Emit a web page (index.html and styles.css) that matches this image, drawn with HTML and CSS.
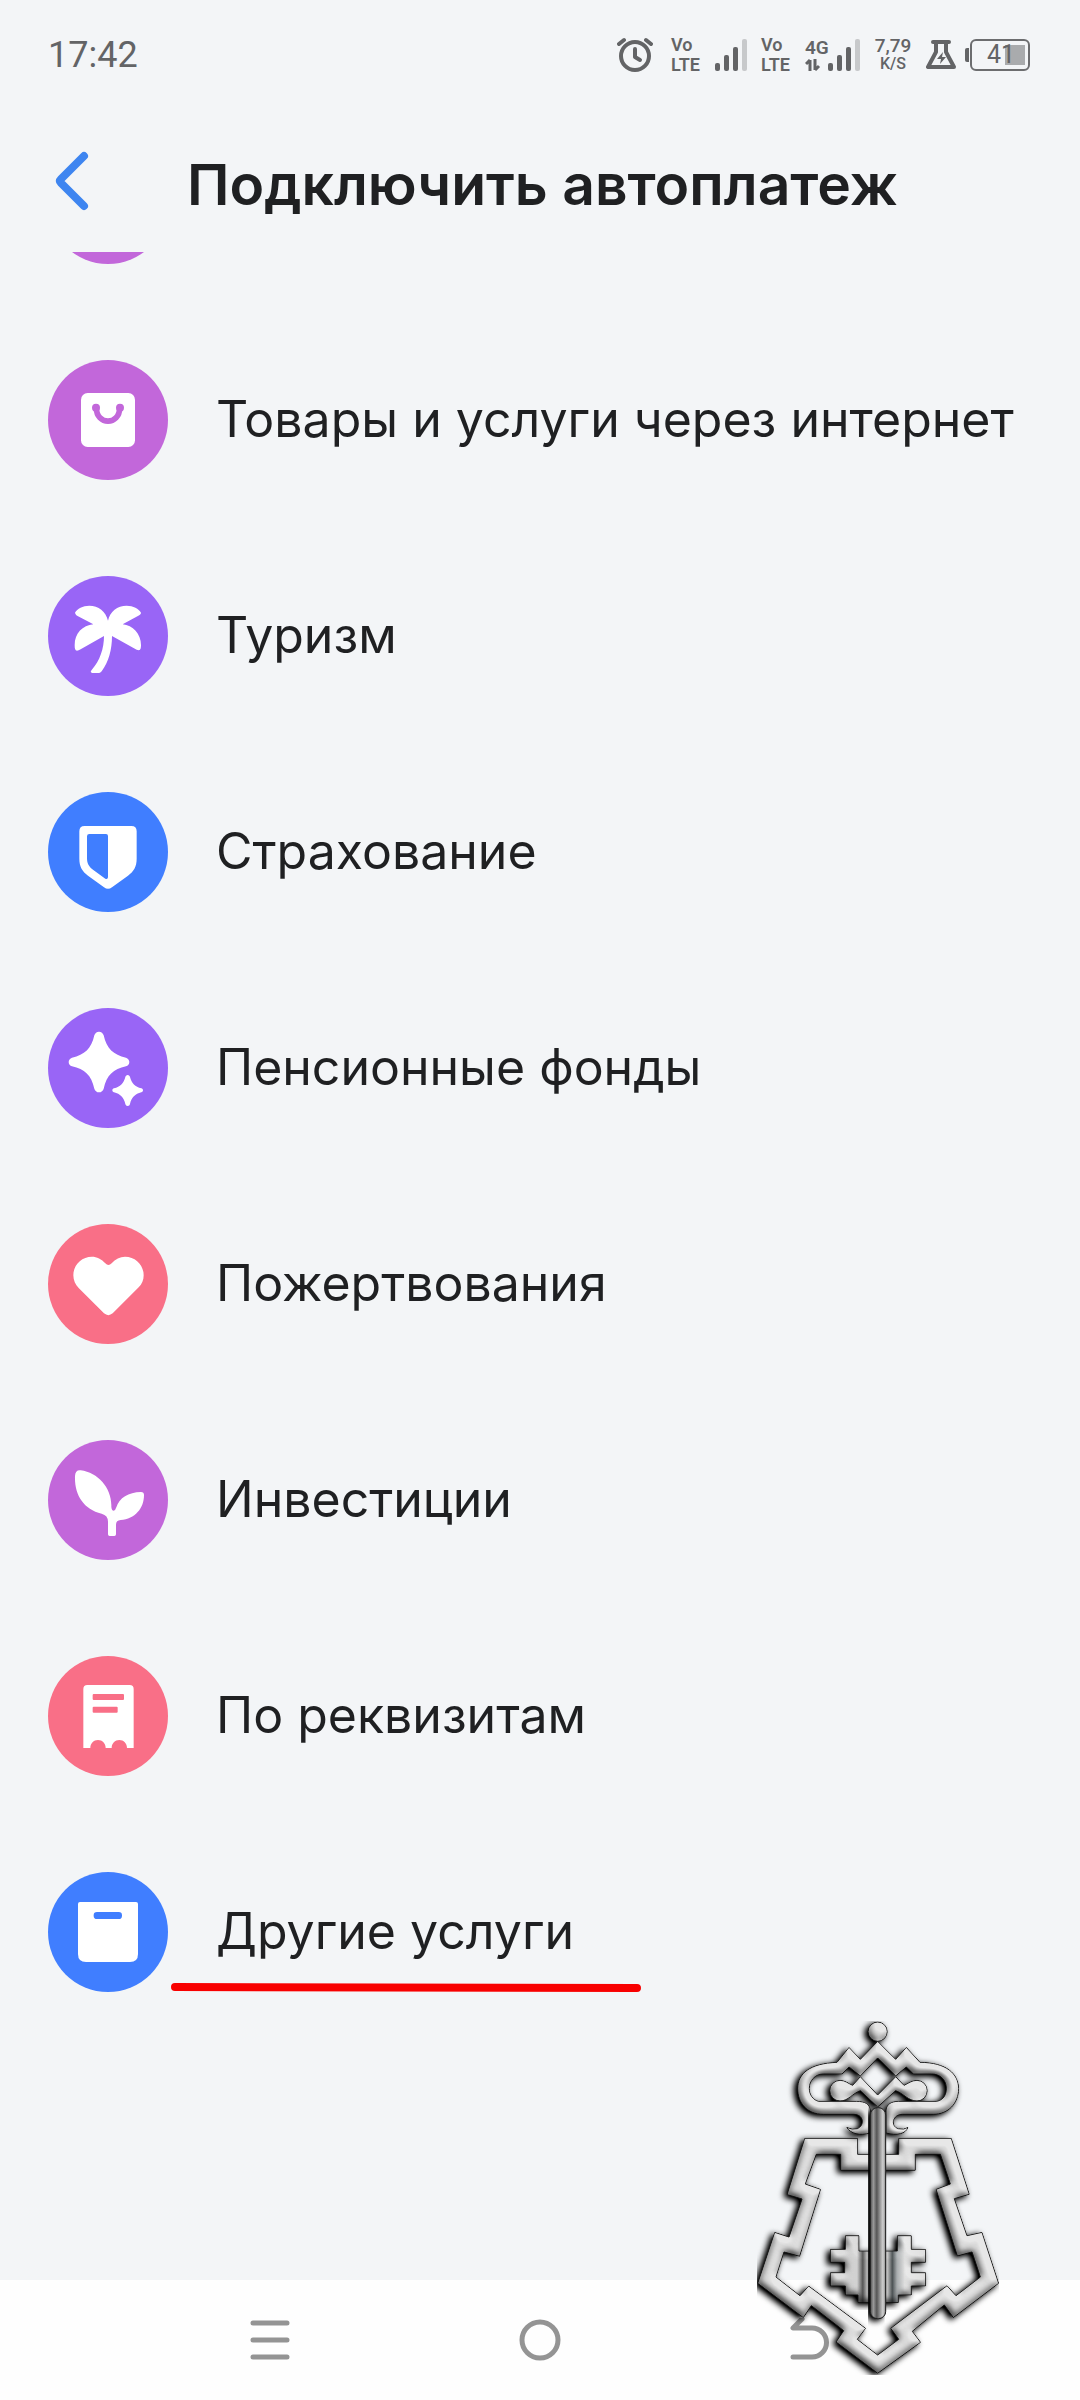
FILE: index.html
```html
<!DOCTYPE html>
<html lang="ru">
<head>
<meta charset="utf-8">
<meta name="viewport" content="width=device-width, initial-scale=1.0">
<title>Подключить автоплатеж</title>
<link rel="stylesheet" href="styles.css">
</head>
<body>
<div class="screen">

  <div class="status-bar">
    <time class="clock">17:42</time>
    <div class="status-icons">
      <svg class="alarm" viewBox="0 0 36 36" fill="none" stroke="currentColor" stroke-linecap="round">
        <circle cx="18" cy="19" r="14" stroke-width="4"/>
        <path d="M18 12v8l5 3" stroke-width="4" stroke-linejoin="round"/>
        <path d="M2 7l5-4M34 7l-5-4" stroke-width="4"/>
      </svg>
      <div class="net"><span>Vo</span><span>LTE</span></div>
      <svg class="signal" viewBox="0 0 32 32" fill="currentColor">
        <rect x="0" y="24" width="5" height="8" rx="2"/>
        <rect x="9" y="16" width="5" height="16" rx="2"/>
        <rect x="18" y="8" width="5" height="24" rx="2"/>
        <rect x="27" y="0" width="5" height="32" rx="2" opacity=".3"/>
      </svg>
      <div class="net"><span>Vo</span><span>LTE</span></div>
      <div class="mobile">
        <div class="net-4g">
          <span>4G</span>
          <svg viewBox="0 0 16 12" fill="none" stroke="currentColor" stroke-width="3">
            <path d="M5 12V1M1 5l4-4M10 0v11M14 7l-4 4"/>
          </svg>
        </div>
        <svg class="signal" viewBox="0 0 32 32" fill="currentColor">
          <rect x="0" y="24" width="5" height="8" rx="2"/>
          <rect x="9" y="16" width="5" height="16" rx="2"/>
          <rect x="18" y="8" width="5" height="24" rx="2"/>
          <rect x="27" y="0" width="5" height="32" rx="2" opacity=".3"/>
        </svg>
      </div>
      <div class="speed"><span>7,79</span><small>K/S</small></div>
      <svg class="flask" viewBox="0 0 30 32">
        <path d="M7 3h16M10 3v10L2 28h26L20 13V3" fill="none" stroke="currentColor" stroke-width="4" stroke-linejoin="round" stroke-linecap="round"/>
        <path d="M17 13l-6 7h4l-1 5 6-7h-4z" fill="currentColor"/>
      </svg>
      <div class="battery">41</div>
    </div>
  </div>

  <header class="header">
    <button class="back" type="button" aria-label="Назад">
      <svg viewBox="0 0 34 60" fill="none" stroke="currentColor" stroke-width="8" stroke-linecap="round" stroke-linejoin="round">
        <path d="M29 5L6 28q-2 2 0 4l23 23"/>
      </svg>
    </button>
    <h1>Подключить автоплатеж</h1>
  </header>

  <main class="list-wrap">
    <ul class="list">
      <li>
        <a class="item" href="#"><span class="icon pink"></span></a>
      </li>
      <li>
        <a class="item" href="#">
          <svg class="icon pink" viewBox="54 60 360 360">
            <rect x="153" y="159" width="162" height="162" rx="20"/>
            <g class="cut">
              <circle cx="198" cy="203" r="12"/>
              <circle cx="270" cy="203" r="12"/>
            </g>
            <path class="cut-line" d="M199 203c0 54 70 54 70 0" stroke-width="17"/>
          </svg>
          <span>Товары и услуги через интернет</span>
        </a>
      </li>
      <li>
        <a class="item" href="#">
          <svg class="icon violet" viewBox="54 708 360 360">
            <path d="M234 842C228 814 205 797 178 797C158 797 142 806 135 818C136 824 141 827 147 830L190 853C158 856 134 880 134 915C134 926 135 931 141 932C144 932 148 930 152 928L222 888C222 925 210 962 185 990C180 996 183 999 190 999L203 999C210 999 213 996 216 992C236 965 246 930 246 888L320 929C328 932 333 932 333 915C333 882 308 856 278 853L325 827C331 824 333 821 333 818C326 806 310 797 290 797C262 797 240 814 234 842Z"/>
          </svg>
          <span>Туризм</span>
        </a>
      </li>
      <li>
        <a class="item" href="#">
          <svg class="icon blue" viewBox="54 66 360 360">
            <path d="M164 168H304Q320 168 320 184V266C320 290 311 304 294 317L246 352Q234 361 222 352L174 317C157 304 148 290 148 266V184Q148 168 164 168Z"/>
            <path class="cut" d="M178 192H228Q234 192 234 198V322Q233 329 226 326L190 300C176 290 171 280 171 265V199Q171 192 178 192Z"/>
          </svg>
          <span>Страхование</span>
        </a>
      </li>
      <li>
        <a class="item" href="#">
          <svg class="icon violet" viewBox="54 714 360 360">
            <path d="M207 785C214 785 219 790 221 796C230 836 250 855 288 863C294 865 298 870 298 876C298 882 294 887 288 889C250 897 230 916 221 956C219 962 214 967 207 967C200 967 195 962 193 956C184 916 164 897 126 889C120 887 116 882 116 876C116 870 120 865 126 863C164 855 184 836 193 796C195 790 200 785 207 785Z"/>
            <path d="M293 915C297 915 299 918 300 921C305 940 315 950 334 955C337 956 339 958 339 961C339 964 337 966 334 967C315 972 305 982 300 1002C299 1005 297 1008 293 1008C289 1008 287 1005 286 1002C281 982 271 972 252 967C249 966 247 964 247 961C247 958 249 956 252 955C271 950 281 940 286 921C287 918 289 915 293 915Z"/>
          </svg>
          <span>Пенсионные фонды</span>
        </a>
      </li>
      <li>
        <a class="item" href="#">
          <svg class="icon red" viewBox="54 72 360 360">
            <path d="M226 190C215 177 200 170 186 170C154 170 130 195 130 226C130 241 136 254 146 264L222 340Q235 351 248 340L326 262C336 252 341 240 341 226C341 195 317 170 285 170C270 170 256 177 245 190Q235 200 226 190Z"/>
          </svg>
          <span>Пожертвования</span>
        </a>
      </li>
      <li>
        <a class="item" href="#">
          <svg class="icon pink" viewBox="54 720 360 360">
            <path d="M152 811Q136 809 135 828C133 884 160 927 215 941Q234 946 234 965V1003Q234 1008 239 1008H253Q258 1008 258 1003V974Q258 961 272 960C315 957 342 925 342 885Q342 876 333 876C295 877 268 893 259 922Q256 932 251 932Q245 932 244 920C246 865 205 818 152 811Z"/>
          </svg>
          <span>Инвестиции</span>
        </a>
      </li>
      <li>
        <a class="item" href="#">
          <svg class="icon red" viewBox="54 78 360 360">
            <path d="M172 165H299Q311 165 311 177V354H291C291 340 281 330 268 330S245 340 245 354H227C227 340 217 330 204 330S181 340 181 354H160V177Q160 165 172 165Z"/>
            <g class="cut">
              <rect x="188" y="192" width="94" height="18" rx="3"/>
              <rect x="188" y="230" width="75" height="18" rx="3"/>
            </g>
          </svg>
          <span>По реквизитам</span>
        </a>
      </li>
      <li>
        <a class="item marked" href="#">
          <svg class="icon blue" viewBox="54 726 360 360">
            <path d="M150 816H318Q324 816 324 822V972Q324 996 300 996H168Q144 996 144 972V822Q144 816 150 816Z"/>
            <rect class="cut" x="191" y="846" width="85" height="21" rx="10"/>
          </svg>
          <span>Другие услуги</span>
          <svg class="underline" viewBox="0 0 470 12">
            <path d="M4 5L466 6" fill="none" stroke="#f80000" stroke-width="8" stroke-linecap="round"/>
          </svg>
        </a>
      </li>
    </ul>
  </main>

  <nav class="nav-bar">
    <button type="button" aria-label="Меню">
      <svg viewBox="0 0 44 44"><path d="M5 5h34M5 22h34M5 39h34"/></svg>
    </button>
    <button type="button" aria-label="Домой">
      <svg viewBox="0 0 44 44"><circle cx="22" cy="22" r="18"/></svg>
    </button>
    <button type="button" aria-label="Назад">
      <svg viewBox="0 0 44 44"><path d="M14 1L5 10h19a14 14 0 0 1 0 29H5"/></svg>
    </button>
  </nav>

  <!-- key emblem over the lower right corner -->
  <svg class="emblem" viewBox="51 63 726 1062" aria-hidden="true">
    <defs>
      <filter id="metal" x="-10%" y="-10%" width="120%" height="120%" color-interpolation-filters="sRGB">
        <feGaussianBlur in="SourceAlpha" stdDeviation="11" result="bump"/>
        <feDiffuseLighting in="bump" surfaceScale="14" diffuseConstant="1.15" lighting-color="#fff" result="light">
          <feDistantLight azimuth="300" elevation="54"/>
        </feDiffuseLighting>
        <feComposite in="SourceGraphic" in2="light" operator="arithmetic" k1="0.78" k2="0.28" k3="0" k4="0" result="lit"/>
        <feComposite in="lit" in2="SourceAlpha" operator="in" result="body"/>
        <feGaussianBlur in="SourceAlpha" stdDeviation="9" result="soft"/>
        <feOffset in="soft" dx="-10" dy="7" result="moved"/>
        <feComponentTransfer in="moved" result="shadow">
          <feFuncA type="linear" slope="1.2"/>
        </feComponentTransfer>
        <feMerge>
          <feMergeNode in="shadow"/>
          <feMergeNode in="body"/>
        </feMerge>
      </filter>
      <linearGradient id="shaft">
        <stop offset="0" stop-color="#4a4a4a"/>
        <stop offset=".2" stop-color="#999"/>
        <stop offset=".42" stop-color="#555"/>
        <stop offset=".6" stop-color="#8c8c8c"/>
        <stop offset=".82" stop-color="#d0d0d0"/>
        <stop offset="1" stop-color="#888"/>
      </linearGradient>
      <linearGradient id="bit">
        <stop offset="0" stop-color="#d2d2d2"/>
        <stop offset=".28" stop-color="#d0d0d0"/>
        <stop offset=".34" stop-color="#555"/>
        <stop offset=".38" stop-color="#aaa"/>
        <stop offset=".6" stop-color="#bbb"/>
        <stop offset=".65" stop-color="#4c5254"/>
        <stop offset=".7" stop-color="#a8acae"/>
        <stop offset=".78" stop-color="#ddd"/>
        <stop offset="1" stop-color="#d2d2d2"/>
      </linearGradient>
    </defs>
    <g stroke="#222" stroke-width="3" fill="#dadada">
      <path filter="url(#metal)" fill-rule="evenodd" d="M194 415H353V463H476V415H634L688 583L643 596L681 707L726 697L776 850L640 953L613 915L517 994L542 1027L413 1120L288 1026L311 992L214 917L190 953L53 850L104 697L147 711L186 597L141 584Z
        M229 463H302V511H526V463H601L631 552L588 568L652 768L696 756L721 831L648 887L621 857L452 985L476 1018L413 1065L352 1018L377 985L206 858L180 887L108 831L132 756L179 769L242 568L196 552Z"/>
      <path filter="url(#metal)" fill="url(#bit)" d="M357 707H316V748H271V787H314V818H271V858H316V885H354V908H475V885H514V858H557V818H514V787H557V748H514V707H472V753H357Z"/>
      <g filter="url(#metal)">
        <path d="M300 241C316 241 324 250 338 256L361 230L413 285L467 230L492 256C505 250 515 241 531 241A31 31 0 0 1 531 303C505 303 490 280 467 272L413 321L361 272C338 280 325 303 300 303A31 31 0 0 1 300 241Z"/>
        <path fill-rule="evenodd" d="M291 187L327 142L361 178L413 124L467 178L499 142L540 187C620 187 656 222 656 266C656 310 625 343 580 343H488C458 343 450 378 475 386Q492 390 504 382C498 402 470 408 438 399V330C440 312 455 304 475 304H590C612 300 619 282 619 265C619 240 600 222 575 222H520L499 201L467 228L413 174L361 228L327 201L306 222H250C225 222 208 243 208 265C208 285 220 300 236 304H350C375 304 389 312 391 330V399C360 408 332 402 320 382Q337 390 352 386C375 376 372 343 340 343H250C200 343 173 308 173 266C173 220 210 190 291 187Z"/>
        <circle cx="413" cy="95" r="29"/>
      </g>
      <g filter="url(#metal)">
        <rect x="391" y="323" width="46" height="633" rx="22"/>
      </g>
      <rect x="391" y="323" width="46" height="633" rx="22" fill="url(#shaft)"/>
    </g>
  </svg>

</div>
</body>
</html>
```
FILE: styles.css
```css
* { box-sizing: border-box; }
body {
  margin: 0;
  font-family: Inter, sans-serif;
  color: #1f2022;
  background: #f3f5f7;
}
.screen {
  position: relative;
  display: flex;
  flex-direction: column;
  min-height: 100vh;
  overflow: hidden;
}
button {
  padding: 0;
  border: none;
  background: none;
}

/* status bar */
.status-bar {
  display: flex;
  align-items: center;
  justify-content: space-between;
  height: 110px;
  padding: 0 50px 0 48px;
  font-family: Roboto, sans-serif;
  color: #636466;
}
.clock { font-size: 36px; }
.status-icons {
  display: flex;
  align-items: center;
  gap: 14px;
}
.alarm {
  width: 36px;
  height: 36px;
  margin-right: 4px;
}
.signal { width: 32px; height: 32px; }
.flask { width: 30px; height: 32px; }
.net, .speed, .net-4g {
  display: flex;
  flex-direction: column;
  font-size: 19px;
  font-weight: 600;
  line-height: 18px;
}
.net {
  width: 30px;
  font-size: 18px;
  line-height: 20px;
}
.mobile { display: flex; }
.net-4g { width: 23px; }
.net-4g svg {
  width: 16px;
  height: 12px;
  margin-top: 2px;
}
.speed {
  width: 38px;
  align-items: center;
  font-weight: 500;
}
.speed small { font-size: 16px; }
.battery {
  position: relative;
  width: 60px;
  height: 32px;
  padding-left: 15px;
  border: 2px solid #6c6d6f;
  border-radius: 6px;
  font-size: 25px;
  line-height: 28px;
  z-index: 0;
}
.battery::before, .battery::after {
  content: "";
  position: absolute;
}
.battery::before {
  left: -7px;
  top: 7px;
  width: 4px;
  height: 14px;
  border-radius: 2px 0 0 2px;
  background: #636466;
}
.battery::after {
  right: 3px;
  top: 4px;
  width: 20px;
  height: 20px;
  background: #a9abad;
  z-index: -1;
}

/* header */
.header {
  display: flex;
  align-items: center;
  gap: 98px;
  height: 142px;
  padding: 0 55px;
}
.back {
  width: 34px;
  height: 60px;
  color: #3e85f0;
}
.back svg { display: block; }
.header h1 {
  margin: 0;
  padding-top: 8px;
  font-size: 57px;
  font-weight: 600;
  line-height: 68px;
  white-space: nowrap;
}

/* list of categories, scrolled down a little */
.list-wrap {
  flex: 1;
  overflow: hidden;
}
.list {
  margin: -156px 0 0;
  padding: 0;
  list-style: none;
}
.item {
  display: flex;
  align-items: center;
  gap: 48px;
  height: 216px;
  padding: 0 48px;
  font-size: 50px;
  line-height: 60px;
  color: inherit;
  text-decoration: none;
  white-space: nowrap;
}
.item span { padding-bottom: 2px; }
.icon {
  flex: none;
  width: 120px;
  height: 120px;
  border-radius: 50%;
  background: var(--tone);
  fill: #fff;
}
.icon .cut { fill: var(--tone); }
.icon .cut-line {
  fill: none;
  stroke: var(--tone);
}
.pink { --tone: #c267da; }
.violet { --tone: #9965f6; }
.blue { --tone: #407eff; }
.red { --tone: #f96f87; }
.marked { position: relative; }
.underline {
  position: absolute;
  left: 171px;
  bottom: 46px;
  width: 470px;
  height: 12px;
}

/* system navigation */
.nav-bar {
  display: grid;
  grid-template-columns: repeat(3, 1fr);
  align-items: center;
  height: 120px;
  padding: 0 12.5%;
  background: #fefefe;
}
.nav-bar svg {
  display: block;
  width: 44px;
  height: 44px;
  margin: 0 auto;
  fill: none;
  stroke: #949494;
  stroke-width: 5;
  stroke-linecap: round;
  stroke-linejoin: round;
}
.emblem {
  position: absolute;
  right: 81px;
  bottom: 25px;
  width: 242px;
  height: 354px;
}
```
